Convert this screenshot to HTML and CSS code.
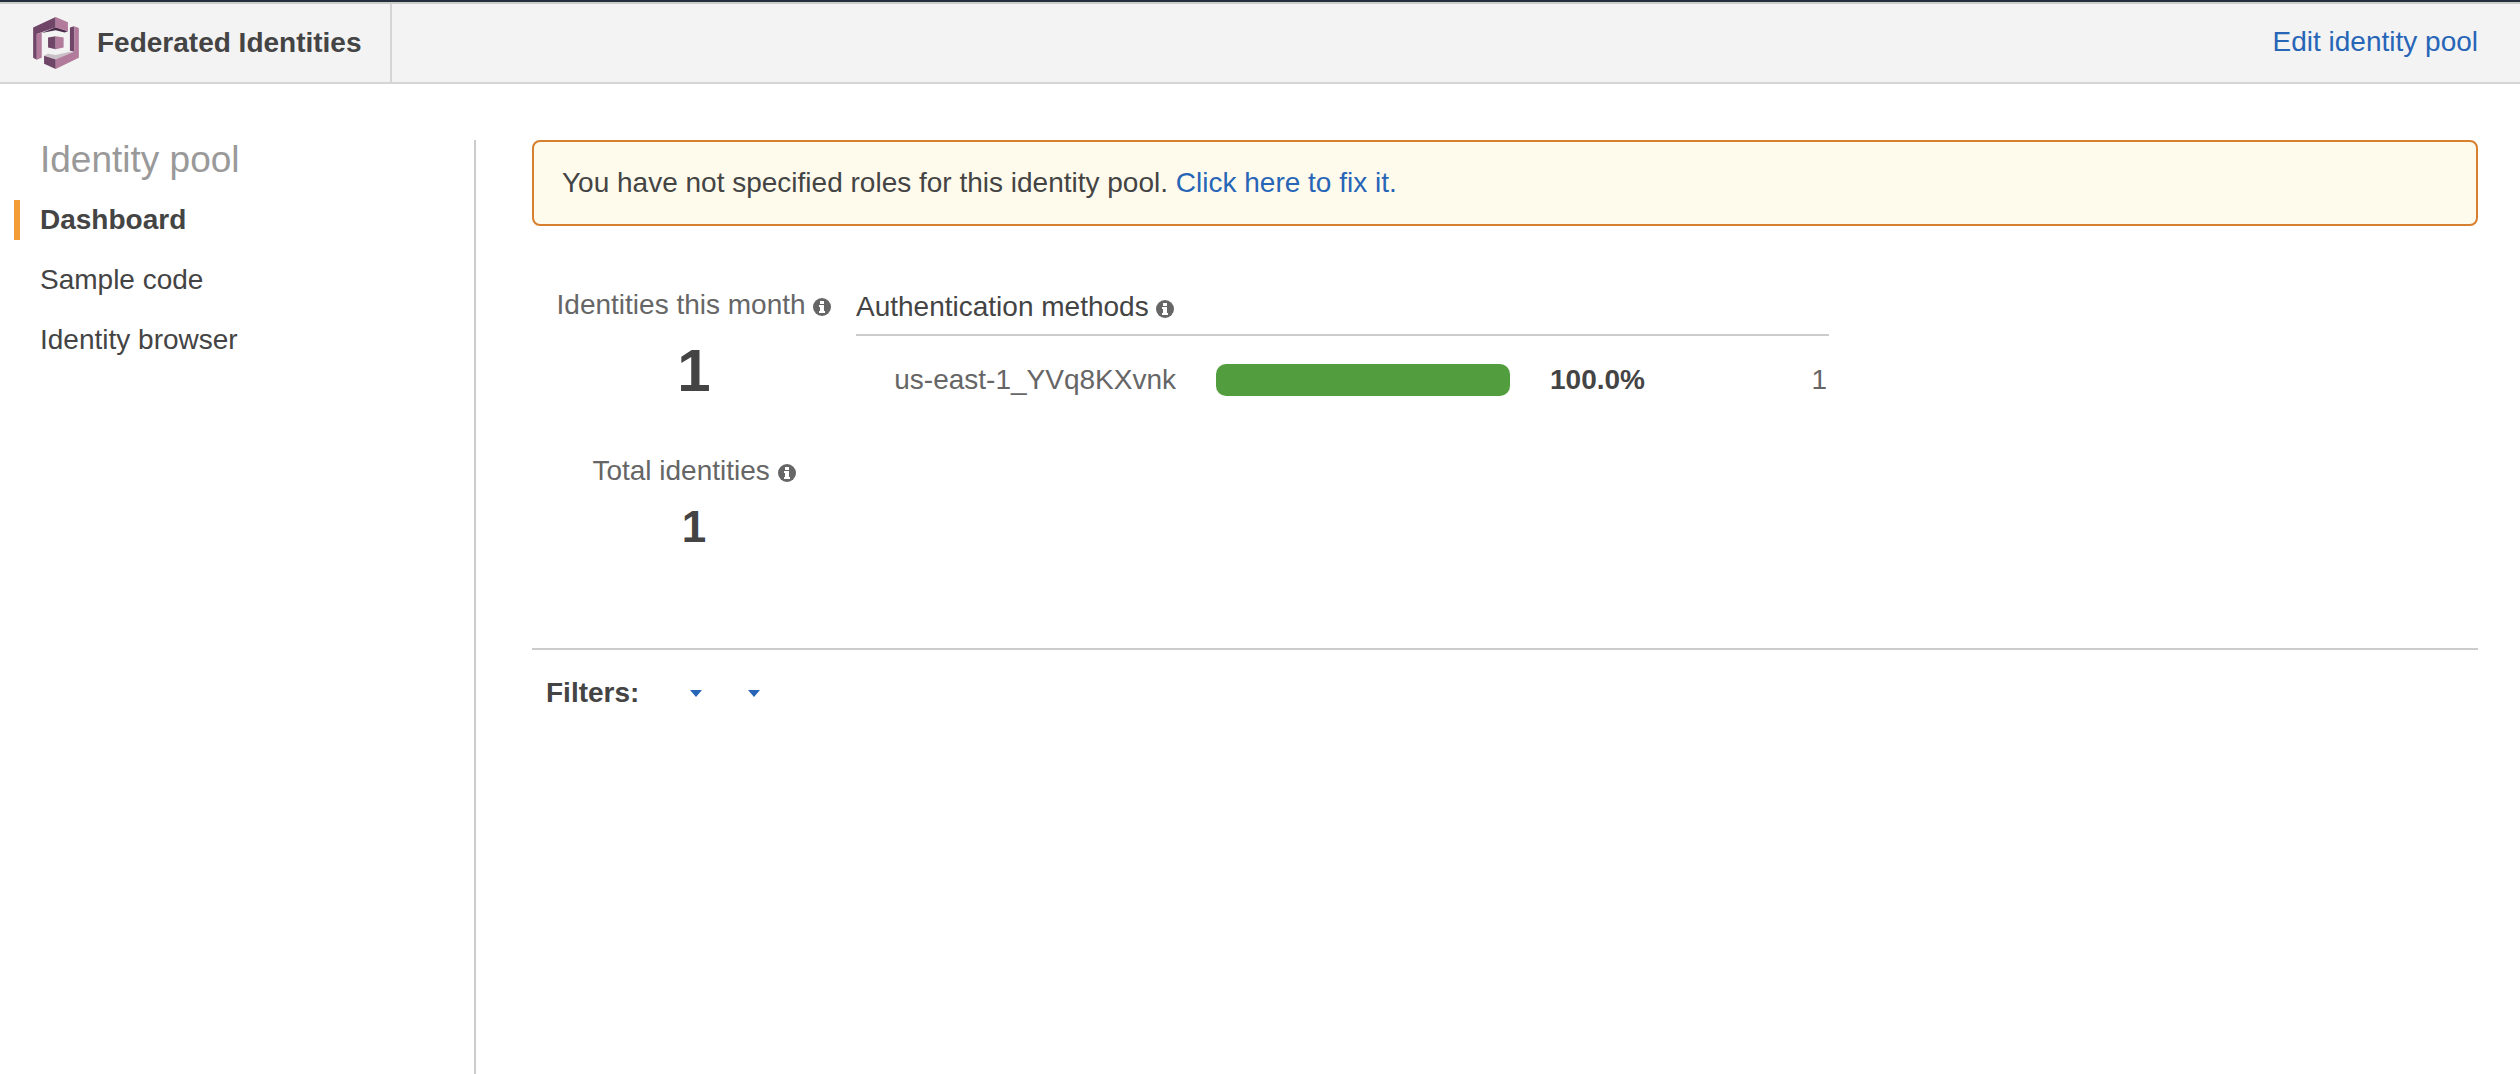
FILE: index.html
```html
<!DOCTYPE html>
<html lang="en">
    <head>
        <meta charset="UTF-8" />
        <meta name="viewport" content="width=device-width, initial-scale=1.0" />
        <title>Federated Identities</title>
        <link rel="stylesheet" href="styles.css">
    </head>
    <body>
        <!-- shared info icon -->
        <svg class="sprite" aria-hidden="true">
            <symbol id="info" viewBox="0 0 18 18">
                <circle cx="9" cy="9" r="9" fill="#666" />
                <path d="M7 3h4v3H7zM6 7h5v6h1v2H6v-2h1V9H6z" fill="#fff" />
            </symbol>
        </svg>

        <header class="topbar">
            <div class="brand">
                <svg class="logo" viewBox="39 29 138 157" aria-hidden="true">
                    <path d="M50 83L107 60L144 72L134 76L107 69L65 77Z" fill="#4a2b49" />
                    <path d="M39 61L107 29V60L50 80V158L39 152Z" fill="#6f4668" />
                    <path d="M107 29L144 45V72L107 60Z" fill="#b27b9b" />
                    <path d="M50 80L65 75V152L50 158Z" fill="#b27b9b" />
                    <path d="M84 91L107 87V126L84 121Z" fill="#6f4668" />
                    <path d="M107 87L131 91V121L107 126Z" fill="#b27b9b" />
                    <path d="M72 145L84 140L107 144L150 134L165 137L107 158Z" fill="#c9c1c6" />
                    <path d="M150 61L163 57V134L150 131Z" fill="#6f4668" />
                    <path d="M163 57L177 62V152L107 186V157L163 134Z" fill="#b27b9b" />
                    <path d="M72 146L107 157V186L72 170Z" fill="#6f4668" />
                </svg>
                <span>Federated Identities</span>
            </div>
            <a class="edit" href="#">Edit identity pool</a>
        </header>

        <div class="layout">
            <nav class="sidebar">
                <h2>Identity pool</h2>
                <a class="active" href="#">Dashboard</a>
                <a href="#">Sample code</a>
                <a href="#">Identity browser</a>
            </nav>

            <main class="content">
                <div class="alert">
                    You have not specified roles for this identity pool.
                    <a href="#">Click here to fix it.</a>
                </div>

                <section class="stats">
                    <div class="counts">
                        <div class="label">Identities this month <svg class="info"><use href="#info" /></svg></div>
                        <div class="number">1</div>
                        <div class="label">Total identities <svg class="info"><use href="#info" /></svg></div>
                        <div class="number total">1</div>
                    </div>
                    <div class="methods">
                        <h3>Authentication methods <svg class="info"><use href="#info" /></svg></h3>
                        <table>
                            <tr>
                                <td class="provider">us-east-1_YVq8KXvnk</td>
                                <td class="chart"><div class="bar" style="width: 100%"></div></td>
                                <td class="percent">100.0%</td>
                                <td class="count">1</td>
                            </tr>
                        </table>
                    </div>
                </section>

                <section class="filters">
                    <strong>Filters:</strong>
                    <button type="button" aria-label="First filter"><span class="caret"></span></button>
                    <button type="button" aria-label="Second filter"><span class="caret"></span></button>
                </section>
            </main>
        </div>
    </body>
</html>
```
FILE: styles.css
```css
* {
    box-sizing: border-box;
}

body {
    display: flex;
    flex-direction: column;
    min-height: 100vh;
    margin: 0;
    background: #fff;
    color: #444;
    font-family: "Liberation Sans", Arial, sans-serif;
    font-size: 28px;
    line-height: 40px;
}

a {
    color: #2765b7;
    text-decoration: none;
}

.sprite {
    display: none;
}

.topbar {
    display: flex;
    justify-content: space-between;
    height: 84px;
    padding-right: 42px;
    background: #f3f3f3;
    border-top: 2px solid #232f3e;
    border-bottom: 2px solid #d5d5d5;
    box-shadow: inset 0 2px #ccc;
}

.brand {
    display: flex;
    align-items: center;
    gap: 18px;
    margin-top: 2px;
    padding: 0 28px 0 33px;
    border-right: 2px solid #d5d5d5;
    font-weight: bold;
}

.logo {
    width: 46px;
    height: 52px;
}

.edit {
    align-self: center;
}

.layout {
    display: flex;
    flex: 1;
    padding: 56px 42px 0 0;
}

.sidebar {
    flex: 0 0 476px;
    border-right: 2px solid #ccc;
}

.sidebar h2 {
    margin: 0 0 20px 40px;
    color: #999;
    font-size: 37px;
    font-weight: normal;
}

.sidebar a {
    display: block;
    margin: 0 0 20px 14px;
    padding-left: 20px;
    border-left: 6px solid transparent;
    color: #444;
}

.sidebar .active {
    border-color: #f49d37;
    font-weight: bold;
}

.content {
    flex: 1;
    margin-left: 56px;
}

.alert {
    padding: 21px 28px;
    background: #fffbec;
    border: 2px solid #d67f2e;
    border-radius: 8px;
}

.stats {
    display: flex;
    height: 424px;
    padding-top: 59px;
    border-bottom: 2px solid #ccc;
}

.info {
    width: 18px;
    height: 18px;
    vertical-align: -2px;
}

.counts {
    flex: 0 0 324px;
    text-align: center;
}

.label {
    color: #666;
}

.number {
    margin: 16px 0 50px;
    font-size: 60px;
    font-weight: bold;
    line-height: 60px;
}

.total {
    margin: 6px 0;
    font-size: 44px;
}

.methods {
    width: 50%;
}

.methods h3 {
    margin: 2px 0 24px;
    padding-bottom: 7px;
    border-bottom: 2px solid #ccc;
    font-size: 28px;
    font-weight: normal;
}

.methods table {
    width: 100%;
    border-collapse: collapse;
    color: #666;
}

.methods td {
    padding: 0;
}

.methods .provider {
    width: 360px;
    padding-right: 40px;
    text-align: right;
}

.methods .chart {
    width: 294px;
}

.bar {
    height: 32px;
    background: #529e3f;
    border-radius: 10px;
}

.methods .percent {
    padding-left: 40px;
    color: #444;
    font-weight: bold;
}

.methods .count {
    padding-right: 2px;
    text-align: right;
}

.filters {
    display: flex;
    align-items: center;
    padding: 23px 14px;
}

.filters strong {
    margin-right: 28px;
}

.filters button {
    width: 58px;
    height: 40px;
    padding: 0;
    background: none;
    border: 0;
}

.caret {
    display: inline-block;
    border: 6px solid transparent;
    border-top: 7px solid #2765b7;
    border-bottom: 0;
    vertical-align: middle;
}
```
